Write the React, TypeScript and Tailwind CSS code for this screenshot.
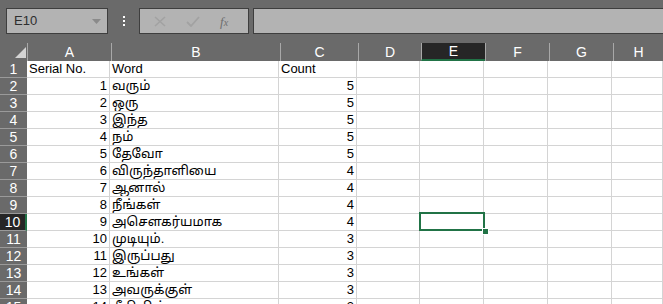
import React from "react";

const rows: [string, string, string][] = [
  ["Serial No.", "Word", "Count"],
  ["1", "வரும்", "5"],
  ["2", "ஒரு", "5"],
  ["3", "இந்த", "5"],
  ["4", "நம்", "5"],
  ["5", "தேவோ", "5"],
  ["6", "விருந்தாளியை", "4"],
  ["7", "ஆனால்", "4"],
  ["8", "நீங்கள்", "4"],
  ["9", "அசௌகர்யமாக", "4"],
  ["10", "முடியும்.", "3"],
  ["11", "இருப்பது", "3"],
  ["12", "உங்கள்", "3"],
  ["13", "அவருக்குள்", "3"],
  ["14", "நீதியின்", "3"],
];

const cols = ["A", "B", "C", "D", "E", "F", "G", "H"];
const widths = ["w-[84px]", "w-[169px]", "w-[78px]", "w-[63px]", "w-[64px]", "w-[64px]", "w-[64px]", "flex-1"];

export default function App() {
  return (
    <div
      className="w-[663px] h-[304px] overflow-hidden bg-[#6a6a6a] relative"
      style={{ fontFamily: '"Liberation Sans", Arial, "Noto Sans Tamil", "Noto Sans", sans-serif' }}
    >
      {/* Toolbar */}
      <div className="h-[43px] flex items-start pt-[8px] pl-[6px]">
        <div className="w-[102px] h-[26px] bg-[#b3b3b3] border border-[#3e3e3e] flex items-center justify-between pl-[7px] pr-[6px]">
          <span className="text-[13px] text-[#2e2e2e]">E10</span>
          <svg width="9" height="5" viewBox="0 0 9 5"><path d="M0 0H9L4.5 5Z" fill="#8a8a8a" /></svg>
        </div>
        <div className="w-[31px] h-[26px] flex flex-col items-center justify-center gap-[2px]">
          <div className="w-[2px] h-[2px] bg-white" />
          <div className="w-[2px] h-[2px] bg-white" />
          <div className="w-[2px] h-[2px] bg-white" />
        </div>
        <div className="w-[110px] h-[26px] bg-[#b3b3b3] border border-[#3e3e3e] flex items-center">
          <svg className="ml-[14px]" width="12" height="11" viewBox="0 0 12 11">
            <path d="M1 1L11 10M11 1L1 10" stroke="#a2a2a2" strokeWidth="1.6" />
          </svg>
          <svg className="ml-[20px]" width="14" height="11" viewBox="0 0 14 11">
            <path d="M1 6L5 10L13 1" stroke="#a2a2a2" strokeWidth="1.8" fill="none" />
          </svg>
          <span
            className="ml-[20px] text-[13px] italic text-[#6e6e6e] leading-none"
            style={{ fontFamily: '"Liberation Serif", serif' }}
          >
            f<span className="text-[10px]">x</span>
          </span>
        </div>
        <div className="ml-[4px] flex-1 h-[26px] bg-[#b3b3b3] border border-[#3e3e3e] border-r-0" />
      </div>

      {/* Column header */}
      <div className="h-[18px] flex">
        <div className="w-[27px] h-full relative">
          <svg className="absolute left-[15px] top-[4px]" width="11" height="11" viewBox="0 0 11 11">
            <path d="M11 0V11H0Z" fill="#d4d4d4" />
          </svg>
        </div>
        {cols.map((c, i) => (
          <div
            key={c}
            className={`${widths[i]} h-full flex items-center justify-center text-[14px] text-white border-l border-[#a8a8a8] ${
              c === "E" ? "bg-[#262626] border-b-2 border-b-[#217346]" : ""
            }`}
          >
            {c}
          </div>
        ))}
      </div>

      {/* Grid */}
      <div className="flex flex-col">
        {rows.map((r, ri) => {
          const sel = ri === 9;
          return (
            <div key={ri} className="flex h-[17px]">
              <div
                className={`w-[27px] h-full flex items-center justify-center text-[14px] text-white border-b border-[#9a9a9a] ${
                  sel ? "bg-[#262626] border-r-2 border-r-[#217346]" : "bg-[#6a6a6a]"
                }`}
              >
                {ri + 1}
              </div>
              <div className="flex-1 flex bg-white">
                {cols.map((c, ci) => {
                  let content = "";
                  let align = "justify-start";
                  if (ci === 0) {
                    content = r[0];
                    align = ri === 0 ? "justify-start" : "justify-end";
                  } else if (ci === 1) content = r[1];
                  else if (ci === 2) {
                    content = r[2];
                    align = ri === 0 ? "justify-start" : "justify-end";
                  }
                  return (
                    <div
                      key={c}
                      className={`${ci === 0 ? "w-[83px]" : widths[ci]} h-full flex items-end ${align} px-[2px] border-r border-b border-[#d4d4d4] text-[13px] leading-[16px] text-black whitespace-nowrap overflow-hidden`}
                    >
                      {content}
                    </div>
                  );
                })}
              </div>
            </div>
          );
        })}
      </div>

      {/* Selection box */}
      <div className="absolute left-[419px] top-[212px] w-[66px] h-[19px] border-2 border-[#217346] pointer-events-none" />
      <div className="absolute left-[482px] top-[228px] w-[5px] h-[5px] bg-[#217346] border border-white box-content" />
    </div>
  );
}
